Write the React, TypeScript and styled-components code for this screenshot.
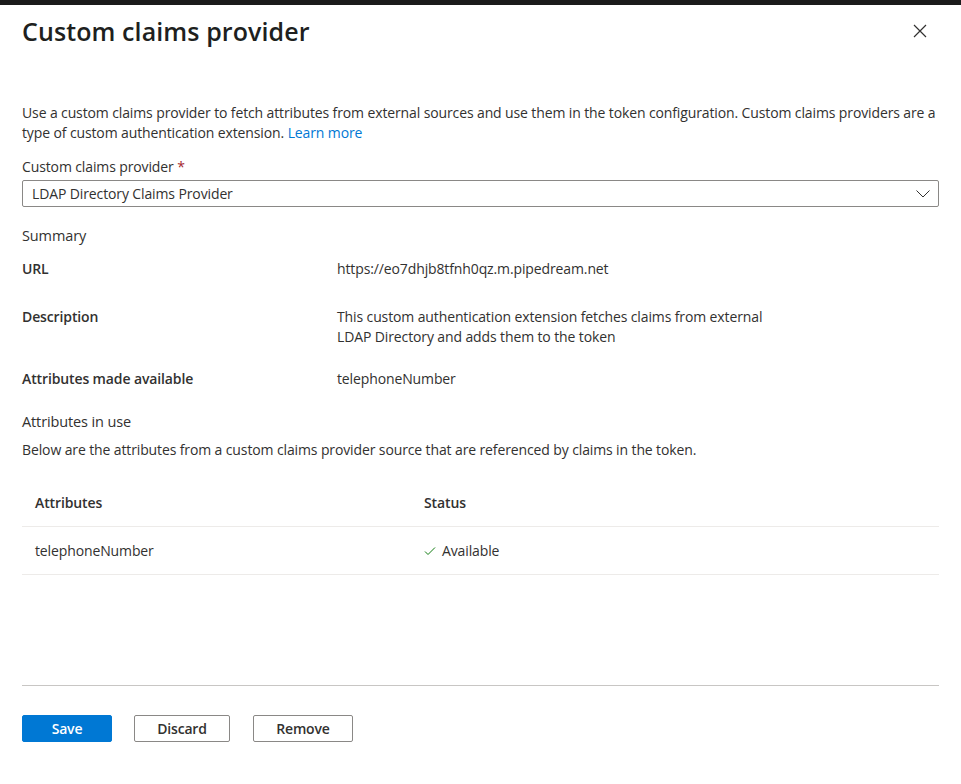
import React from "react";
import styled, { createGlobalStyle } from "styled-components";

const Global = createGlobalStyle`
  html, body { margin: 0; padding: 0; background: #fff; }
  body { font-family: "Open Sans", "Noto Sans", sans-serif; color: #323130; }
  * { box-sizing: border-box; }
`;

const Page = styled.div`
  width: 961px;
  height: 784px;
  display: flex;
  flex-direction: column;
  border-top: 5px solid #1b1b1b;
  font-size: 14px;
  letter-spacing: -0.12px;
`;

const Header = styled.div`
  display: flex;
  align-items: center;
  justify-content: space-between;
  padding: 4px 34px 0 22px;
  height: 48px;
`;

const Title = styled.h1`
  margin: 0;
  font-size: 25px;
  font-weight: 600;
  letter-spacing: 0.1px;
  color: #201f1e;
`;

const CloseButton = styled.button`
  border: 0;
  background: transparent;
  padding: 0;
  width: 14px;
  height: 14px;
  display: flex;
  align-items: center;
  justify-content: center;
`;

const Body = styled.div`
  flex: 1;
  display: flex;
  flex-direction: column;
  padding: 50px 22px 0 22px;
`;

const Paragraph = styled.p<{ $top?: number }>`
  margin: ${(p) => p.$top ?? 0}px 0 0 0;
  line-height: 20px;
`;

const Link = styled.a`
  color: #0078d4;
  text-decoration: none;
`;

const Label = styled.div`
  margin-top: 14px;
  line-height: 20px;
`;

const Required = styled.span`
  color: #a4262c;
`;

const Select = styled.div`
  margin-top: 3px;
  height: 27px;
  border: 1px solid #8a8886;
  border-radius: 2px;
  display: flex;
  align-items: center;
  justify-content: space-between;
  padding: 0 8px 0 9px;
`;

const SectionHeading = styled.div<{ $top: number }>`
  font-size: 14.5px;
  line-height: 20px;
  margin-top: ${(p) => p.$top}px;
`;

const SummaryGrid = styled.div`
  display: grid;
  grid-template-columns: 315px 1fr;
  margin-top: 13px;
`;

const Key = styled.div<{ $pb: number }>`
  font-weight: 600;
  line-height: 20px;
  padding-bottom: ${(p) => p.$pb}px;
`;

const Val = styled.div<{ $pb: number }>`
  line-height: 20px;
  padding-bottom: ${(p) => p.$pb}px;
`;

const Table = styled.div`
  margin-top: 19px;
  display: flex;
  flex-direction: column;
`;

const Row = styled.div<{ $h: number }>`
  display: grid;
  grid-template-columns: 389px 1fr;
  height: ${(p) => p.$h}px;
  align-items: center;
  padding-left: 13px;
  border-bottom: 1px solid #edebe9;
`;

const HeadCell = styled.div`
  font-weight: 600;
`;

const StatusCell = styled.div`
  display: flex;
  align-items: center;
  gap: 6px;
`;

const Footer = styled.div`
  margin: 0 22px;
  border-top: 1px solid #c8c6c4;
  padding: 29px 0 42px;
  display: flex;
  gap: 22px;
`;

const Button = styled.button<{ $primary?: boolean; $w: number; $ml?: number }>`
  height: 27px;
  width: ${(p) => p.$w}px;
  margin-left: ${(p) => p.$ml ?? 0}px;
  border-radius: 2px;
  font-family: inherit;
  font-size: 14px;
  font-weight: 600;
  letter-spacing: -0.2px;
  border: 1px solid ${(p) => (p.$primary ? "#0078d4" : "#8a8886")};
  background: ${(p) => (p.$primary ? "#0078d4" : "#fff")};
  color: ${(p) => (p.$primary ? "#fff" : "#323130")};
  padding: 0;
`;

export default function App() {
  return (
    <>
      <Global />
      <Page>
        <Header>
          <Title>Custom claims provider</Title>
          <CloseButton aria-label="Close">
            <svg width="14" height="14" viewBox="0 0 14 14">
              <path d="M1 1 L13 13 M13 1 L1 13" stroke="#323130" strokeWidth="1.2" />
            </svg>
          </CloseButton>
        </Header>
        <Body>
          <Paragraph>
            Use a custom claims provider to fetch attributes from external sources and use them in the token
            configuration. Custom claims providers are a type of custom authentication extension.{" "}
            <Link href="#">Learn more</Link>
          </Paragraph>
          <Label>
            Custom claims provider <Required>*</Required>
          </Label>
          <Select>
            <span>LDAP Directory Claims Provider</span>
            <svg width="14" height="8" viewBox="0 0 14 8">
              <path d="M0.5 0.5 L7 7 L13.5 0.5" fill="none" stroke="#323130" strokeWidth="1" />
            </svg>
          </Select>
          <SectionHeading $top={19}>Summary</SectionHeading>
          <SummaryGrid>
            <Key $pb={28}>URL</Key>
            <Val $pb={28}>https://eo7dhjb8tfnh0qz.m.pipedream.net</Val>
            <Key $pb={22}>Description</Key>
            <Val $pb={22}>
              This custom authentication extension fetches claims from external
              <br />
              LDAP Directory and adds them to the token
            </Val>
            <Key $pb={0}>Attributes made available</Key>
            <Val $pb={0}>telephoneNumber</Val>
          </SummaryGrid>
          <SectionHeading $top={23}>Attributes in use</SectionHeading>
          <Paragraph $top={8}>
            Below are the attributes from a custom claims provider source that are referenced by claims in the token.
          </Paragraph>
          <Table>
            <Row $h={48}>
              <HeadCell>Attributes</HeadCell>
              <HeadCell>Status</HeadCell>
            </Row>
            <Row $h={48}>
              <div>telephoneNumber</div>
              <StatusCell>
                <svg width="12" height="10" viewBox="0 0 12 10">
                  <path d="M1 5.5 L4 8.5 L11 1.5" fill="none" stroke="#107c10" strokeWidth="1" />
                </svg>
                Available
              </StatusCell>
            </Row>
          </Table>
        </Body>
        <Footer>
          <Button $primary $w={90}>Save</Button>
          <Button $w={96}>Discard</Button>
          <Button $w={100} $ml={1}>Remove</Button>
        </Footer>
      </Page>
    </>
  );
}
